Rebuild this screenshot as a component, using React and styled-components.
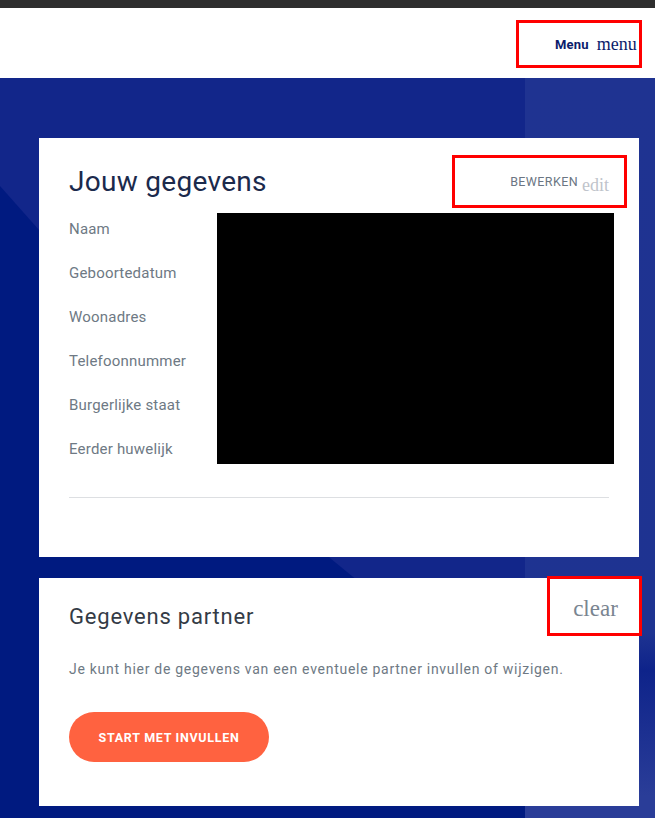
import React from "react";
import styled, { createGlobalStyle } from "styled-components";

const GlobalStyle = createGlobalStyle`
  html, body {
    margin: 0;
    padding: 0;
    background: #001a80;
  }
  body {
    font-family: Roboto, "Open Sans", Arial, sans-serif;
    -webkit-font-smoothing: antialiased;
  }
  * {
    box-sizing: border-box;
  }
`;

const Page = styled.div`
  width: 655px;
  height: 818px;
  display: flex;
  flex-direction: column;
  overflow: hidden;
`;

const ChromeStrip = styled.div`
  height: 8px;
  background: #2e2e2e;
  flex-shrink: 0;
`;

const Header = styled.header`
  height: 70px;
  background: #ffffff;
  display: flex;
  align-items: center;
  justify-content: flex-end;
  padding-right: 13px;
  flex-shrink: 0;
`;

const Marked = styled.button`
  display: flex;
  align-items: center;
  border: 3px solid #ff0000;
  background: transparent;
  cursor: pointer;
  padding: 0;
`;

const MenuButton = styled(Marked)`
  width: 126px;
  height: 48px;
  margin-top: 2px;
  padding-left: 36px;
  gap: 8px;
`;

const MenuLabel = styled.span`
  font-family: Roboto, Arial, sans-serif;
  font-weight: 700;
  font-size: 13px;
  letter-spacing: 0.2px;
  color: #0b1c6b;
`;

const IconGlyph = styled.span`
  font-family: "Liberation Serif", "Times New Roman", serif;
  font-size: ${(p) => p.size}px;
  color: ${(p) => p.color};
  line-height: 1;
  margin-top: ${(p) => p.drop || 0}px;
`;

const Main = styled.main`
  flex: 1;
  position: relative;
  background: #001a80;
  padding: 60px 16px 12px 39px;
  display: flex;
  flex-direction: column;
  gap: 21px;

  &::before {
    content: "";
    position: absolute;
    inset: 0;
    background: #12268a;
    clip-path: polygon(0 0, 525px 0, 525px 640px, 330px 480px, 0 108px);
  }

  &::after {
    content: "";
    position: absolute;
    top: 0;
    bottom: 0;
    left: 525px;
    right: 0;
    background: linear-gradient(180deg, #1f3391 0%, #1e3391 75%, #0e238a 80%, #2a3d98 97%);
  }
`;

const Card = styled.section`
  position: relative;
  z-index: 1;
  width: 600px;
  background: #ffffff;
  padding: ${(p) => p.pad};
`;

const CardHead = styled.div`
  display: flex;
  align-items: center;
  justify-content: space-between;
  height: 53px;
`;

const Title = styled.h2`
  margin: 0;
  font-family: Roboto, Arial, sans-serif;
  font-weight: 400;
  font-size: ${(p) => p.size}px;
  letter-spacing: ${(p) => p.spacing || 0}px;
  color: ${(p) => p.color};
  line-height: 1.2;
`;

const EditButton = styled(Marked)`
  width: 175px;
  height: 53px;
  margin-right: -18px;
  justify-content: flex-end;
  padding-right: 15px;
  gap: 4px;
`;

const EditLabel = styled.span`
  font-family: Roboto, Arial, sans-serif;
  font-size: 12.5px;
  letter-spacing: 0.4px;
  color: #6b7683;
`;

const DataBlock = styled.div`
  display: flex;
  align-items: flex-start;
`;

const LabelList = styled.dl`
  margin: 0;
  width: 148px;
  flex-shrink: 0;
`;

const Label = styled.dt`
  height: 44px;
  line-height: 42px;
  font-size: 15px;
  letter-spacing: 0.2px;
  color: #6e7984;
`;

const Redacted = styled.div`
  width: 397px;
  height: 251px;
  margin-top: 5px;
  flex-shrink: 0;
  background: #000000;
`;

const Divider = styled.hr`
  margin: 25px 0 0;
  border: none;
  border-top: 1px solid #dddfe2;
`;

const ClearButton = styled(Marked)`
  position: absolute;
  top: -2px;
  right: -3px;
  width: 95px;
  height: 60px;
  justify-content: center;
  padding-left: 2px;
`;

const Text = styled.p`
  margin: 29px 0 0;
  font-size: 14px;
  line-height: 20px;
  letter-spacing: 0.72px;
  color: #6e7984;
`;

const PrimaryButton = styled.button`
  margin-top: 33px;
  width: 200px;
  height: 50px;
  border: none;
  border-radius: 25px;
  background: #ff6240;
  color: #ffffff;
  font-family: Roboto, Arial, sans-serif;
  font-weight: 700;
  font-size: 12.5px;
  letter-spacing: 0.7px;
  cursor: pointer;
`;

const fields = [
  "Naam",
  "Geboortedatum",
  "Woonadres",
  "Telefoonnummer",
  "Burgerlijke staat",
  "Eerder huwelijk",
];

export default function App() {
  return (
    <Page>
      <GlobalStyle />
      <ChromeStrip />
      <Header>
        <MenuButton>
          <MenuLabel>Menu</MenuLabel>
          <IconGlyph size={18} color="#0b1c6b">menu</IconGlyph>
        </MenuButton>
      </Header>

      <Main>
        <Card pad="17px 30px 59px 30px">
          <CardHead>
            <Title size={28} color="#1b2a4c" spacing={0.3}>
              Jouw gegevens
            </Title>
            <EditButton>
              <EditLabel>BEWERKEN</EditLabel>
              <IconGlyph size={18} color="#bfc4cb" drop={6}>edit</IconGlyph>
            </EditButton>
          </CardHead>
          <DataBlock>
            <LabelList>
              {fields.map((f) => (
                <Label key={f}>{f}</Label>
              ))}
            </LabelList>
            <Redacted />
          </DataBlock>
          <Divider />
        </Card>

        <Card pad="26px 30px 44px 30px">
          <Title size={22} color="#343b46" spacing={0.8}>
            Gegevens partner
          </Title>
          <ClearButton>
            <IconGlyph size={23} color="#7a8591" drop={5}>clear</IconGlyph>
          </ClearButton>
          <Text>
            Je kunt hier de gegevens van een eventuele partner invullen of
            wijzigen.
          </Text>
          <PrimaryButton>START MET INVULLEN</PrimaryButton>
        </Card>
      </Main>
    </Page>
  );
}
